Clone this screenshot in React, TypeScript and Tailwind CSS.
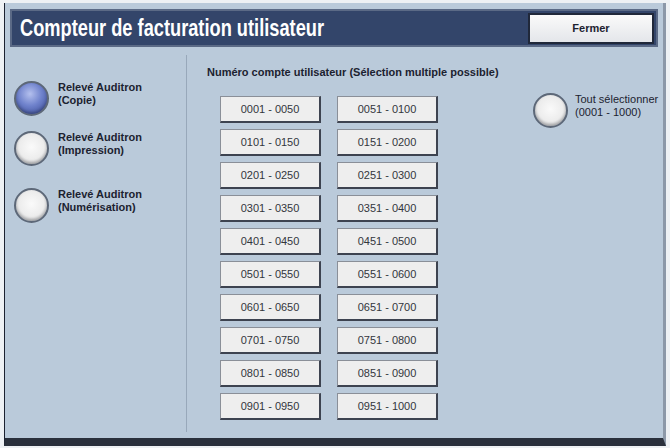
import React from "react";

const ranges: string[][] = [
  ["0001 - 0050", "0051 - 0100"],
  ["0101 - 0150", "0151 - 0200"],
  ["0201 - 0250", "0251 - 0300"],
  ["0301 - 0350", "0351 - 0400"],
  ["0401 - 0450", "0451 - 0500"],
  ["0501 - 0550", "0551 - 0600"],
  ["0601 - 0650", "0651 - 0700"],
  ["0701 - 0750", "0751 - 0800"],
  ["0801 - 0850", "0851 - 0900"],
  ["0901 - 0950", "0951 - 1000"],
];

function Radio({ on = false }: { on?: boolean }) {
  return (
    <div
      className={`size-[35px] shrink-0 rounded-full border-[2px] border-[#5d6878] ${
        on
          ? "bg-[radial-gradient(circle_at_45%_35%,#b4c0ee_0%,#6f82cc_45%,#33448f_100%)]"
          : "bg-[radial-gradient(circle_at_50%_45%,#fafafa_0%,#ececec_55%,#b9bcc2_100%)]"
      } shadow-[inset_0_-2px_3px_rgba(0,0,0,0.25)]`}
    />
  );
}

function RadioRow({ on, line1, line2 }: { on?: boolean; line1: string; line2: string }) {
  return (
    <div className="flex items-center gap-[9px]">
      <Radio on={on} />
      <div className="text-[11px] leading-[13px] font-bold text-[#1c2230] -mt-[10px]">
        <div>{line1}</div>
        <div>{line2}</div>
      </div>
    </div>
  );
}

function RangeButton({ label }: { label: string }) {
  return (
    <button className="w-[101px] h-[27px] bg-[#eeeeee] border border-[#8a8f98] border-r-[2px] border-b-[2px] border-r-[#3d4350] border-b-[#3d4350] text-[11px] text-[#33363c] flex items-center justify-center">
      {label}
    </button>
  );
}

export default function App() {
  return (
    <div className="w-[670px] h-[448px] bg-[#eef1f4] pl-[4px] pt-[3px] pr-[4px] font-['Liberation_Sans',Arial,sans-serif]">
      <div className="h-[443px] flex flex-col bg-[#bacada] border-l border-[#1b2130] border-r-[3px] border-r-[#8c98a8] border-b-[8px] border-b-[#2a303c]">
        <div className="mx-[5px] mt-[6px] h-[38px] bg-[#33456a] border-[2px] border-[#5b6a86] flex items-center justify-between pl-[8px] pr-[2px]">
          <h1 className="text-white text-[24px] leading-[28px] font-bold origin-left scale-x-[0.76] whitespace-nowrap">
            Compteur de facturation utilisateur
          </h1>
          <button className="w-[126px] h-[31px] bg-[linear-gradient(#fafafa,#e4e6ea)] border-[2px] border-[#20283a] text-[11px] font-bold text-[#1c2230]">
            Fermer
          </button>
        </div>

        <div className="flex flex-1">
          <div className="w-[181px] flex flex-col pl-[9px] pt-[34px]">
            <RadioRow on line1="Relevé Auditron" line2="(Copie)" />
            <div className="mt-[15px]">
              <RadioRow line1="Relevé Auditron" line2="(Impression)" />
            </div>
            <div className="mt-[22px]">
              <RadioRow line1="Relevé Auditron" line2="(Numérisation)" />
            </div>
          </div>

          <div className="w-px bg-[#98a8ba] mt-[8px] mb-[6px]" />

          <div className="flex-1 flex pt-[18px]">
            <div className="w-[340px] flex flex-col">
              <p className="pl-[20px] text-[11px] font-bold text-[#1c2230] leading-[14px]">
                Numéro compte utilisateur (Sélection multiple possible)
              </p>
              <div className="pl-[33px] mt-[17px] grid grid-cols-[101px_101px] gap-x-[16px] gap-y-[6px]">
                {ranges.flat().map((r) => (
                  <RangeButton key={r} label={r} />
                ))}
              </div>
            </div>
            <div className="pt-[28px] pl-[6px]">
              <div className="flex items-center gap-[7px]">
                <Radio />
                <div className="text-[11px] leading-[13px] text-[#1c2230] -mt-[10px]">
                  <div>Tout sélectionner</div>
                  <div>(0001 - 1000)</div>
                </div>
              </div>
            </div>
          </div>
        </div>
      </div>
    </div>
  );
}
